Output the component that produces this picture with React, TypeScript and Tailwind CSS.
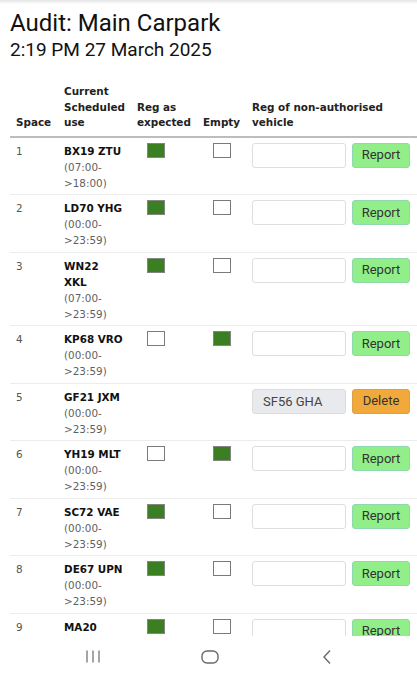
import React from "react";

type Row = {
  space: number;
  reg: string;
  time: string;
  expected?: boolean;
  empty?: boolean;
  reported?: string;
};

const rows: Row[] = [
  { space: 1, reg: "BX19 ZTU", time: "(07:00->18:00)", expected: true, empty: false },
  { space: 2, reg: "LD70 YHG", time: "(00:00->23:59)", expected: true, empty: false },
  { space: 3, reg: "WN22 XKL", time: "(07:00->23:59)", expected: true, empty: false },
  { space: 4, reg: "KP68 VRO", time: "(00:00->23:59)", expected: false, empty: true },
  { space: 5, reg: "GF21 JXM", time: "(00:00->23:59)", reported: "SF56 GHA" },
  { space: 6, reg: "YH19 MLT", time: "(00:00->23:59)", expected: false, empty: true },
  { space: 7, reg: "SC72 VAE", time: "(00:00->23:59)", expected: true, empty: false },
  { space: 8, reg: "DE67 UPN", time: "(00:00->23:59)", expected: true, empty: false },
  { space: 9, reg: "MA20 KFD", time: "(00:00->23:59)", expected: true, empty: false },
  { space: 10, reg: "RJ21 PLE", time: "(00:00->23:59)", expected: true, empty: false },
];

function Box({ checked }: { checked: boolean }) {
  return (
    <div
      className={
        checked
          ? "ml-[10px] h-[15px] w-[18px] border-[1.5px] border-[#858585] bg-[#3a7f22]"
          : "ml-[10px] h-[15px] w-[18px] border-[1.5px] border-[#7a7a7a] bg-white"
      }
    />
  );
}

function NavBar() {
  return (
    <div className="fixed bottom-0 left-0 right-0 grid h-[41px] grid-cols-[117px_117px_117px] items-center justify-items-center bg-white pl-[34px] text-[#6a6a6a]">
      <svg width="16" height="13" viewBox="0 0 16 13" fill="none" stroke="currentColor" strokeWidth="1.2">
        <path d="M2 0.5v12M8 0.5v12M14 0.5v12" />
      </svg>
      <svg width="18" height="14" viewBox="0 0 18 14" fill="none" stroke="currentColor" strokeWidth="1.4">
        <rect x="1" y="1" width="16" height="12" rx="5" />
      </svg>
      <svg width="12" height="16" viewBox="0 0 12 16" fill="none" stroke="currentColor" strokeWidth="1.4">
        <path d="M9 1.5L3 8l6 6.5" />
      </svg>
    </div>
  );
}

export default function App() {
  const cell = "align-top pt-[5px] pb-[3.5px] px-[6px] border-b border-[#ececec]";
  const head = "align-bottom pt-[5px] pb-[5px] px-[6px] text-left font-bold";

  return (
    <div className="min-h-[677px] bg-white pb-[60px] pl-[10px] text-[#111]">
      <div className="fixed left-0 right-0 top-0 h-[4px] bg-gradient-to-b from-[#e4e4e4] to-white" />
      <h1 className="pt-[9px] text-[24px] leading-[28px] font-normal" style={{ fontFamily: "Roboto, sans-serif" }}>
        Audit: Main Carpark
      </h1>
      <div className="mt-[2px] text-[19px] leading-[22px]" style={{ fontFamily: "Roboto, sans-serif" }}>
        2:19 PM 27 March 2025
      </div>

      <table
        className="mt-[18px] w-[407px] table-fixed border-collapse text-[10.4px]"
        style={{ fontFamily: '"DejaVu Sans", Verdana, sans-serif' }}
      >
        <colgroup>
          <col className="w-[48px]" />
          <col className="w-[73px]" />
          <col className="w-[66px]" />
          <col className="w-[49px]" />
          <col className="w-[171px]" />
        </colgroup>
        <thead className="leading-[15.5px] text-[#222]">
          <tr className="border-b-2 border-[#bdbdbd]">
            <th className={head}>Space</th>
            <th className={head + " pr-[8px]"}>Current Scheduled use</th>
            <th className={head}>Reg as expected</th>
            <th className={head}>Empty</th>
            <th className={head}>Reg of non-authorised vehicle</th>
          </tr>
        </thead>
        <tbody className="leading-[16px]">
          {rows.map((r) => (
            <tr key={r.space}>
              <td className={cell + " text-[#555]"}>{r.space}</td>
              <td className={cell + " pr-[8px]"}>
                <div className="font-bold text-[#111]">{r.reg}</div>
                <div className="text-[#5f5f5f]">{r.time}</div>
              </td>
              <td className={cell}>{r.reported ? null : <Box checked={!!r.expected} />}</td>
              <td className={cell}>{r.reported ? null : <Box checked={!!r.empty} />}</td>
              <td className={cell + " pt-[4px]"}>
                <div className="flex gap-[6px]" style={{ fontFamily: "Roboto, sans-serif" }}>
                  {r.reported ? (
                    <>
                      <input
                        disabled
                        value={r.reported}
                        readOnly
                        className="h-[25px] w-[94px] rounded-[3px] border border-[#dcdcdc] bg-[#e9eaed] px-[10px] text-[13px] text-[#444]"
                      />
                      <button
                        type="button"
                        className="h-[25px] w-[58px] rounded-[3px] border border-[#dda04a] bg-[#f2a93b] text-[13px] text-[#333]"
                      >
                        Delete
                      </button>
                    </>
                  ) : (
                    <>
                      <input className="h-[25px] w-[94px] rounded-[3px] border border-[#dedede] bg-white px-[10px] text-[13px]" />
                      <button
                        type="button"
                        className="h-[25px] w-[58px] rounded-[3px] border border-[#8fd8ae] bg-[#92ee88] text-[13px] text-[#333]"
                      >
                        Report
                      </button>
                    </>
                  )}
                </div>
              </td>
            </tr>
          ))}
        </tbody>
      </table>
      <NavBar />
    </div>
  );
}
